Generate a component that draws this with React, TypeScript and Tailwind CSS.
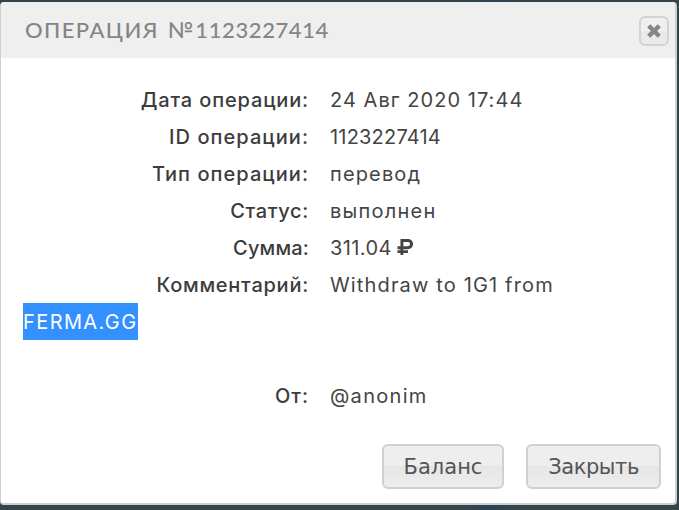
import clsx from "clsx";

type Row = {
  label: string;
  labelClass: string;
  value: string;
  valueClass: string;
  rouble?: boolean;
};

const rows: Row[] = [
  { label: "Дата операции:", labelClass: "tracking-[0.85px]", value: "24 Авг 2020 17:44", valueClass: "tracking-[1.05px]" },
  { label: "ID операции:", labelClass: "tracking-[1.05px]", value: "1123227414", valueClass: "tracking-[0.2px]" },
  { label: "Тип операции:", labelClass: "tracking-[1.05px]", value: "перевод", valueClass: "tracking-[1.15px]" },
  { label: "Статус:", labelClass: "tracking-[0.65px]", value: "выполнен", valueClass: "tracking-[1.25px]" },
  { label: "Сумма:", labelClass: "tracking-[0.15px]", value: "311.04", valueClass: "tracking-[0.4px]", rouble: true },
  { label: "Комментарий:", labelClass: "tracking-[0.75px]", value: "Withdraw to 1G1 from", valueClass: "tracking-[1.15px]" },
];

function Rouble() {
  return (
    <svg width="16" height="16" viewBox="0 0 16 16" fill="none" stroke="#444" strokeWidth="2.9" className="mb-[2px] ml-[5px]">
      <path d="M4.9 16V1.5H11a3.6 3.6 0 0 1 0 7.2H0.5M0.5 12.6H11" />
    </svg>
  );
}

function DetailRow({ label, labelClass, value, valueClass, rouble }: Row) {
  return (
    <div className="flex h-[37px] items-center whitespace-nowrap">
      <div className="flex w-[286px] justify-end font-medium text-[#3c3c3c]">
        <span className={labelClass}>{label}</span>
      </div>
      <div className="ml-[21px] flex items-center">
        <span className={valueClass}>{value}</span>
        {rouble && <Rouble />}
      </div>
    </div>
  );
}

function Button({ children, className }: { children: string; className: string }) {
  return (
    <button
      className={clsx(
        "flex h-[45px] items-center justify-center rounded-[6px] border-2 border-[#d0d0d0] bg-linear-to-b from-[#eeeeee] from-50% via-[#e6e6e6] via-50% to-[#ededed] pt-[3px] font-['DejaVu_Sans',sans-serif] text-[21px] text-[#555]",
        className,
      )}
    >
      {children}
    </button>
  );
}

export default function App() {
  return (
    <div className="h-[510px] w-[679px] overflow-hidden bg-linear-to-r from-[#35444b] from-69% via-[#294457] via-72% to-[#35444b] to-76% pt-[2px]">
      <div className="flex h-[503px] w-[677px] flex-col overflow-hidden rounded-[4px] border-r-2 border-b-2 border-l border-[#ccd0d0] bg-white">
        <div className="flex h-14 shrink-0 items-center justify-between bg-[#efefef] pr-[6px] pl-6">
          <h1 className="mb-[2px] flex font-['Lato',sans-serif] text-[22px] font-medium whitespace-nowrap text-[#858585]">
            <span className="tracking-[1.4px]">ОПЕРАЦИЯ</span>
            <span className="ml-[9px] tracking-[2px]">№</span>
            <span className="tracking-[0.6px]">1123227414</span>
          </h1>
          <button className="mt-px flex h-[30px] w-[30px] items-center justify-center rounded-[6px] border-2 border-[#d3d3d3] bg-linear-to-b from-[#efefef] from-50% to-[#eaeaea] to-50%">
            <svg width="14" height="14" viewBox="0 0 14 14" stroke="#858585" strokeWidth="4.4">
              <path d="M1.7 1.7l10.6 10.6M12.3 1.7l-10.6 10.6" />
            </svg>
          </button>
        </div>

        <div className="pt-[23px] pl-[22px] font-['Inter',sans-serif] text-[20px] text-[#444]">
          {rows.map((row) => (
            <DetailRow key={row.label} {...row} />
          ))}
          <div className="flex h-[37px] w-[115px] items-center bg-[#3390ff] tracking-[1.4px] whitespace-nowrap text-white">
            FERMA.GG
          </div>
          <div className="h-[37px]" />
          <DetailRow label="От:" labelClass="tracking-[1px]" value="@anonim" valueClass="tracking-[1.3px]" />
        </div>

        <div className="mt-auto mr-[14px] mb-[14px] flex justify-end gap-[22px]">
          <Button className="w-[122px]">Баланс</Button>
          <Button className="w-[135px] tracking-[-0.4px]">Закрыть</Button>
        </div>
      </div>
    </div>
  );
}
